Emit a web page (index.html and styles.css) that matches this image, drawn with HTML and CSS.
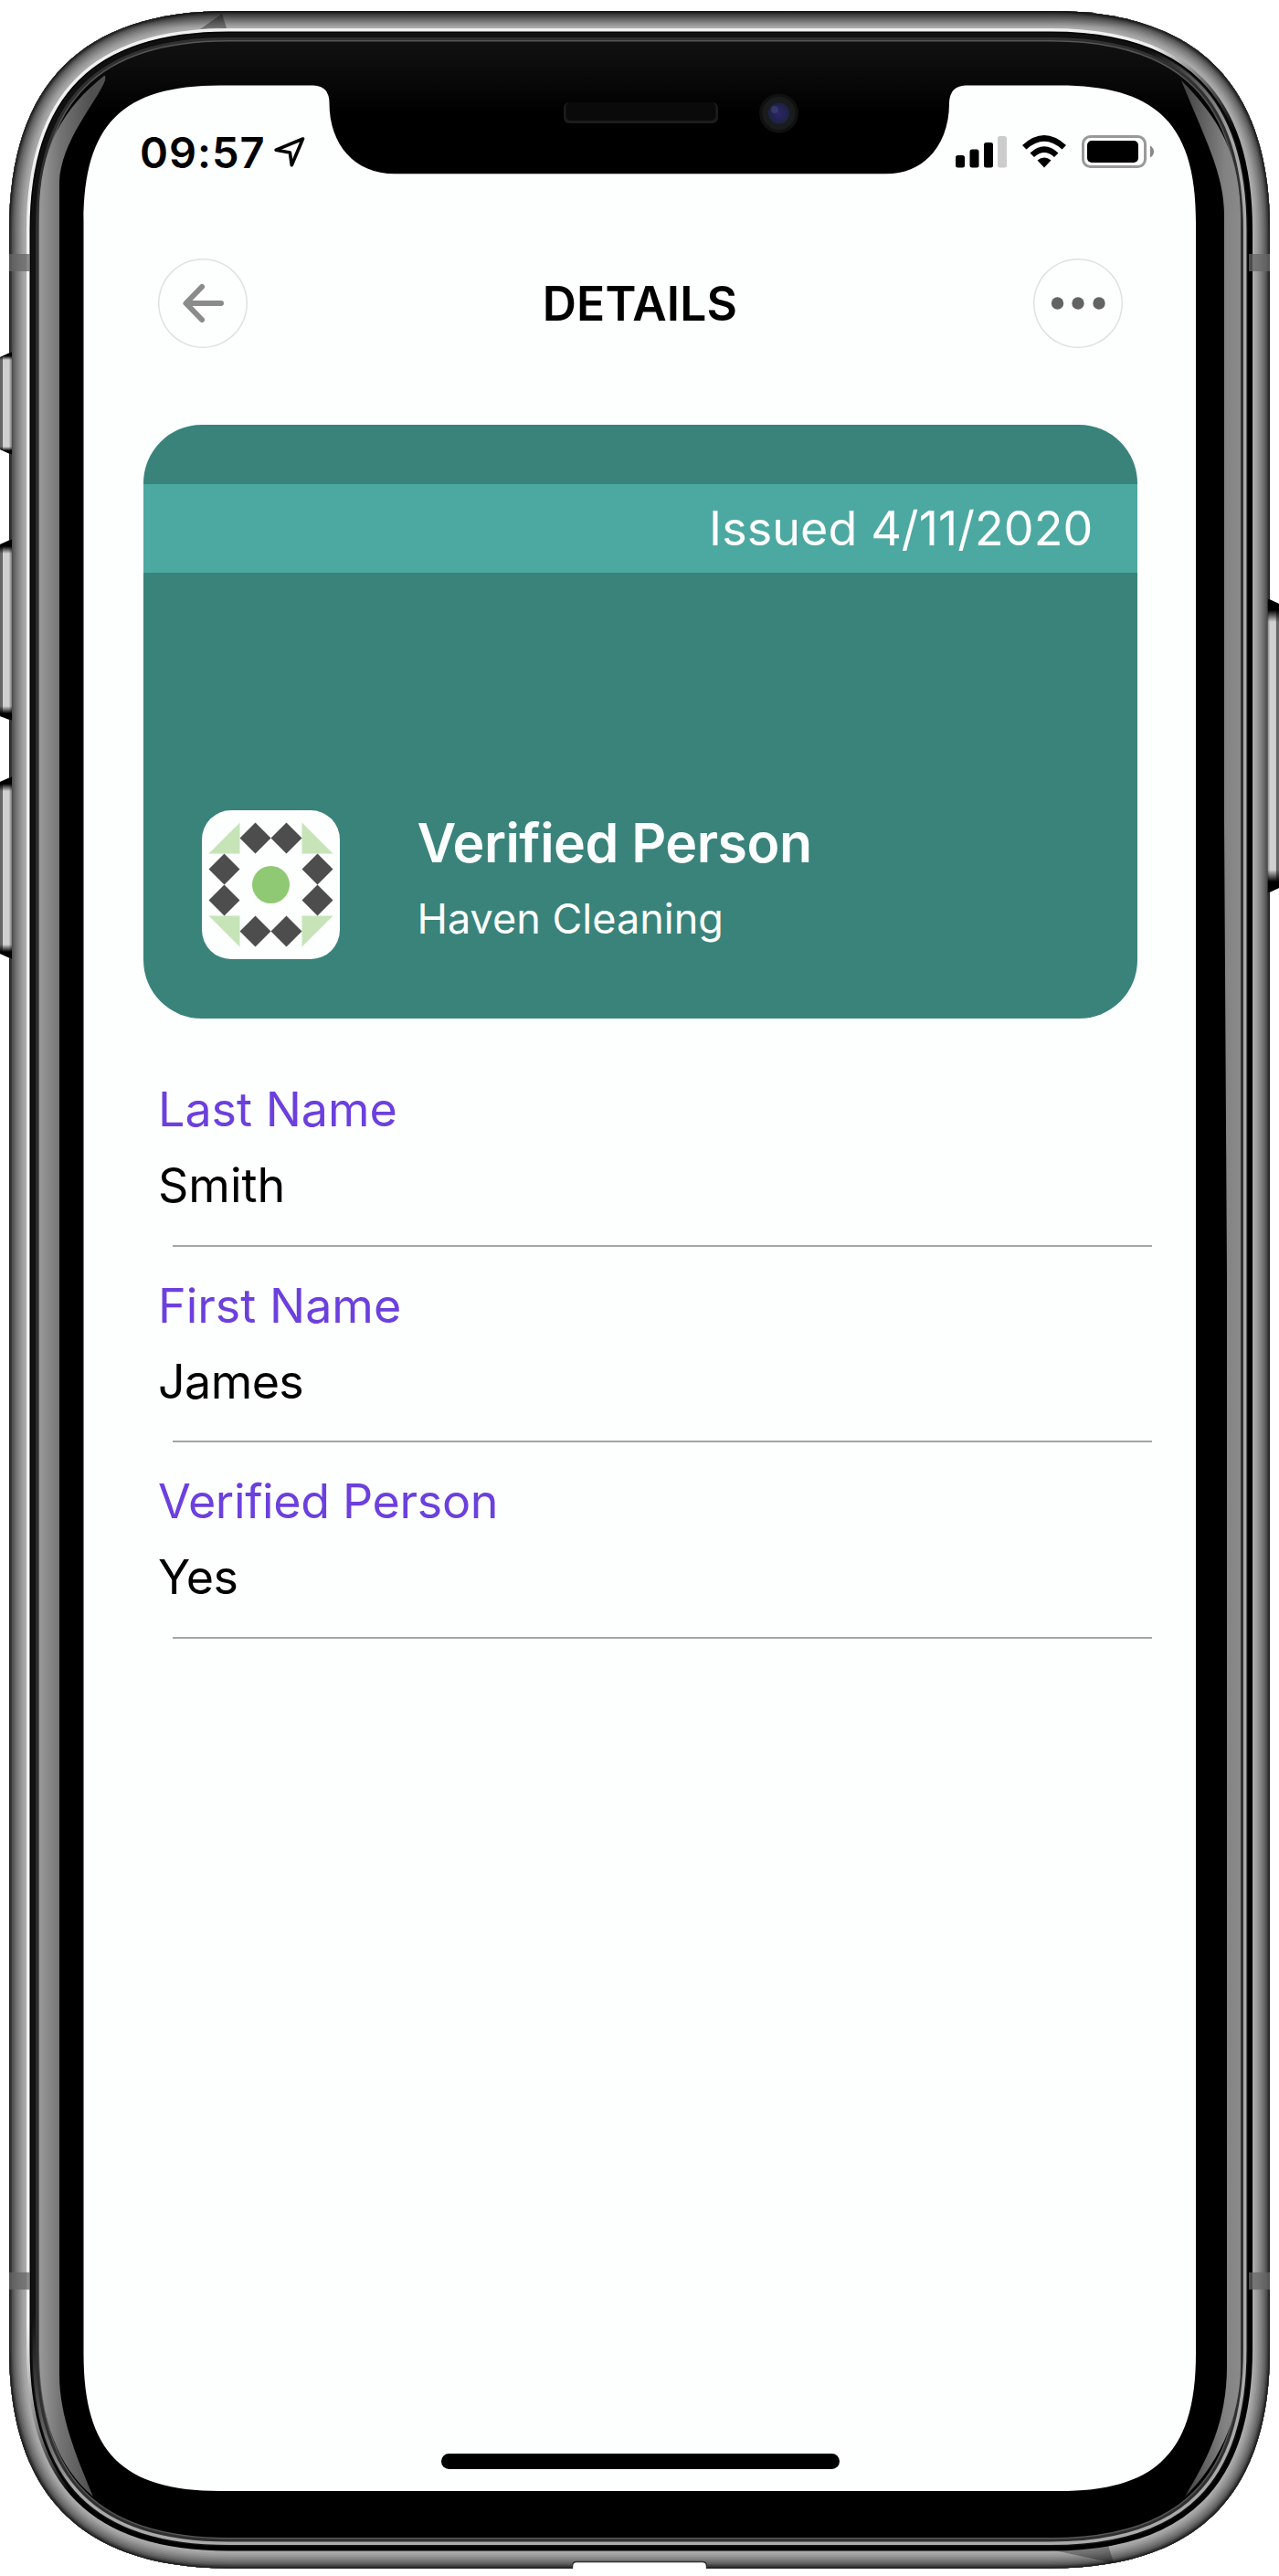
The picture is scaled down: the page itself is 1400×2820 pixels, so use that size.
FILE: index.html
```html
<!DOCTYPE html>
<html lang="en">
<head>
<meta charset="utf-8">
<title>Details</title>
<link rel="stylesheet" href="styles.css">
</head>
<body>
<div class="phone">
  <svg class="frame" viewBox="0 0 1400 2820" aria-hidden="true">
    <defs>
      <path id="body" d="M10 252C10 92 90 12 250 12H1150C1310 12 1390 92 1390 252V2571.500C1390 2731.500 1310 2811.500 1150 2811.500H250C90 2811.500 10 2731.500 10 2571.500Z"/>
      <clipPath id="bodyClip"><use href="#body"/></clipPath>
      <linearGradient id="bright" x1="0" y1="0" x2="1" y2="1"><stop offset=".46" stop-color="#f0f0f0"/><stop offset=".51" stop-color="#000"/></linearGradient>
      <linearGradient id="rim" x1="0" y1="0" x2="1" y2="1"><stop offset=".46" stop-color="#101010"/><stop offset=".51" stop-color="#aaa"/></linearGradient>
      <linearGradient id="topShade" x1="0" y1="0" x2="0" y2="1"><stop offset="0" stop-color="#000" stop-opacity=".35"/><stop offset="1" stop-color="#000" stop-opacity="0"/></linearGradient>
      <linearGradient id="topGlass" x1="0" y1="0" x2="0" y2="1"><stop offset="0" stop-color="#111"/><stop offset=".3" stop-color="#0d0d0d"/><stop offset="1" stop-color="#000"/></linearGradient>
      <linearGradient id="shineL" x1="43" y1="0" x2="100" y2="0" gradientUnits="userSpaceOnUse"><stop offset="0" stop-color="#999"/><stop offset=".4" stop-color="#747474"/><stop offset="1" stop-color="#505050"/></linearGradient>
      <linearGradient id="shineR" x1="1300" y1="0" x2="1358" y2="0" gradientUnits="userSpaceOnUse"><stop offset="0" stop-color="#484848"/><stop offset=".7" stop-color="#828282"/><stop offset="1" stop-color="#8a8a8a"/></linearGradient>
      <linearGradient id="keyL" x1="0" y1="0" x2="13" y2="0" gradientUnits="userSpaceOnUse"><stop offset=".2" stop-color="#666"/><stop offset=".25" stop-color="#d0d0d0"/><stop offset=".75" stop-color="#d0d0d0"/><stop offset="1" stop-color="#777"/></linearGradient>
      <linearGradient id="keyR" x1="1387" y1="0" x2="1400" y2="0" gradientUnits="userSpaceOnUse"><stop offset="0" stop-color="#777"/><stop offset=".25" stop-color="#d0d0d0"/><stop offset=".72" stop-color="#d0d0d0"/><stop offset=".8" stop-color="#666"/></linearGradient>
      <linearGradient id="keyEnds" x1="0" y1="0" x2="0" y2="1"><stop offset="0" stop-color="#000"/><stop offset=".04" stop-color="#000"/><stop offset=".08" stop-color="#000" stop-opacity="0"/><stop offset=".92" stop-color="#000" stop-opacity="0"/><stop offset=".96" stop-color="#000"/><stop offset="1" stop-color="#000"/></linearGradient>
      <radialGradient id="lens"><stop offset="0" stop-color="#2b2866"/><stop offset=".6" stop-color="#252255"/><stop offset="1" stop-color="#1c2340"/></radialGradient>
    </defs>
    <g clip-path="url(#bodyClip)" fill="none">
      <use href="#body" fill="#000"/>
      <rect x="43" y="44" width="1314" height="80" fill="url(#topGlass)"/>
      <use href="#body" stroke="#555" stroke-width="67"/>
      <use href="#body" stroke="#303030" stroke-width="64"/>
      <use href="#body" stroke="url(#rim)" stroke-width="58"/>
      <use href="#body" stroke="#111" stroke-width="51"/>
      <use href="#body" stroke="#000" stroke-width="48"/>
      <use href="#body" stroke="url(#bright)" stroke-width="45"/>
      <use href="#body" stroke="#a8a9a8" stroke-width="38"/>
      <use href="#body" stroke="#a0a1a0" stroke-width="33"/>
      <use href="#body" stroke="#969796" stroke-width="29"/>
      <use href="#body" stroke="#8a8b8a" stroke-width="25"/>
      <use href="#body" stroke="#7e7f7e" stroke-width="21"/>
      <use href="#body" stroke="#707170" stroke-width="17"/>
      <use href="#body" stroke="#606160" stroke-width="13"/>
      <use href="#body" stroke="#4e4f4e" stroke-width="9"/>
      <use href="#body" stroke="#3a3a3a" stroke-width="6"/>
      <use href="#body" stroke="#222" stroke-width="3"/>
      <rect x="100" y="12" width="1200" height="18" fill="url(#topShade)"/>
      <path d="M243 15L219 32Q232 30 248 31Z" fill="#000" fill-opacity=".35"/>
      <path d="M1213 2786L1219 2806L1145 2790Z" fill="#000" fill-opacity=".3"/>
      <path d="M10 278h23v19H10zM1367 278h23v19h-23zM10 2487.500h23v19H10zM1367 2487.500h23v19h-23z" fill="#666" fill-opacity=".75"/>
    </g>
    <path d="M627 2814V2809Q627 2805 631 2805H769Q773 2805 773 2809V2814Z" fill="#fff"/>
    <path d="M626.500 2811.500V2809Q626.500 2804.500 631 2804.500H769Q773.500 2804.500 773.500 2809V2811.500" fill="none" stroke="#333" stroke-width="1.500"/>
    <path d="M114 83C70 118 43 160 43 235V2575C43 2650 65 2702 102 2733C84 2690 65 2645 65 2600V200C66 155 107 110 115 88Q116 82 114 83Z" fill="url(#shineL)"/>
    <path d="M1293 88C1335 130 1358 170 1358 240V2590C1358 2650 1330 2702 1297 2733C1323 2690 1343 2650 1343 2590V1400L1340 900V235C1340 190 1318 150 1293 88Z" fill="url(#shineR)"/>
    <g fill="url(#keyL)">
      <path d="M0 391L13 385V498L0 492Z"/><path d="M0 596L13 590V789L0 784Z"/><path d="M0 856L13 850V1050L0 1044Z"/>
    </g>
    <path d="M1387.500 655L1400 661V972L1387.500 978Z" fill="url(#keyR)"/>
    <g fill="url(#keyEnds)">
      <path d="M0 391L13 385V498L0 492Z"/><path d="M0 596L13 590V789L0 784Z"/><path d="M0 856L13 850V1050L0 1044Z"/>
      <path d="M1387.500 655L1400 661V972L1387.500 978Z"/>
    </g>
    <path d="M91.500 243C91.500 136 134 93.500 241 93.500H343Q360.500 94 360.500 113C360.500 158 388 190.300 432 190.300H970C1012 190.300 1039 158 1039 113Q1039.500 94 1057 93.500H1159C1266 93.500 1309 136 1309 243V2577C1309 2684 1266 2727 1159 2727H241C134 2727 91.500 2684 91.500 2577Z" fill="#fdfefe"/>
    <rect x="617" y="112" width="169" height="23" rx="6" fill="#1c1c1d"/>
    <rect x="619.500" y="112" width="164" height="20" rx="5" fill="#0a0a0a"/>
    <circle cx="852.500" cy="124" r="21.500" fill="#101011"/>
    <circle cx="852.500" cy="124" r="18" fill="#1a1b1d"/>
    <circle cx="852.500" cy="124" r="11.500" fill="url(#lens)"/>
    <circle cx="848" cy="120" r="4" fill="#4a5284" fill-opacity=".45"/>
  </svg>

  <main class="screen">
    <header class="status">
      <div class="status-time">
        <span class="clock">09:57</span>
        <svg class="location" viewBox="0 0 34 34" aria-hidden="true"><path d="M31.500 2L2.200 14.200L17.400 17L19.300 30.800Z" fill="none" stroke="#000" stroke-width="3.600" stroke-linejoin="round"/></svg>
      </div>
      <div class="status-icons">
        <svg class="signal" viewBox="0 0 56 36" aria-hidden="true"><rect y="22" width="10" height="13.500" rx="2.500"/><rect x="15.500" y="15.500" width="10" height="20" rx="2.500"/><rect x="31" y="8" width="10" height="27.500" rx="2.500"/><rect x="46" y="1" width="10" height="34.500" rx="2.500" fill="#ccc"/></svg>
        <svg class="wifi" viewBox="0 0 48 36" aria-hidden="true"><path d="M24 35.500L16.500 27.500Q24 21.500 31.500 27.500ZM8.500 19.500Q24 5 39.500 19.500L35 24Q24 14 13 24ZM0 11Q24-11 48 11L43.500 15.500Q24-2 4.500 15.500Z"/></svg>
        <svg class="battery" viewBox="0 0 80 36" aria-hidden="true"><rect x="1.500" y="1.500" width="68" height="33" rx="8" fill="none" stroke="#999" stroke-width="3"/><rect x="6" y="6" width="56" height="24" rx="5"/><path d="M75 11.500Q79 14 79 18T75 24.500Z" fill="#888"/></svg>
      </div>
    </header>

    <nav class="nav">
      <button class="round" aria-label="Back"><svg viewBox="0 0 98 98"><path d="M69 49H31M48 31L30.500 49L48 67" fill="none" stroke="#8b8b8b" stroke-width="6" stroke-linecap="round" stroke-linejoin="round"/></svg></button>
      <h1 class="title">DETAILS</h1>
      <button class="round" aria-label="More"><svg viewBox="0 0 98 98" fill="#636363"><circle cx="26.500" cy="49" r="6.700"/><circle cx="49" cy="49" r="6.700"/><circle cx="72" cy="49" r="6.700"/></svg></button>
    </nav>

    <section class="card">
      <div class="issued">Issued 4/11/2020</div>
      <div class="identity">
        <svg class="emblem" viewBox="0 0 151 163" aria-hidden="true">
          <rect width="151" height="163" rx="32" fill="#fdfefe"/>
          <path d="M7.500 47.500H41.500V13.500ZM109.500 13.500V47.500H143.500ZM7.500 115.500H41.500V149.500ZM109.500 115.500H143.500L109.500 149.500Z" fill="#c6e4b8"/>
          <path d="M58.500 13.500L75.500 30.500L92.500 13.500L109.500 30.500L92.500 47.500L75.500 30.500L58.500 47.500L41.500 30.500ZM58.500 115.500L75.500 132.500L92.500 115.500L109.500 132.500L92.500 149.500L75.500 132.500L58.500 149.500L41.500 132.500ZM24.500 47.500L41.500 64.500L24.500 81.500L41.500 98.500L24.500 115.500L7.500 98.500L24.500 81.500L7.500 64.500ZM126.500 47.500L143.500 64.500L126.500 81.500L143.500 98.500L126.500 115.500L109.500 98.500L126.500 81.500L109.500 64.500Z" fill="#4d4d4d"/>
          <circle cx="75.500" cy="81.500" r="20.500" fill="#8fc973"/>
        </svg>
        <div class="identity-text">
          <h2 class="credential">Verified Person</h2>
          <p class="issuer">Haven Cleaning</p>
        </div>
      </div>
    </section>

    <dl class="fields">
      <div class="field"><dt>Last Name</dt><dd>Smith</dd></div>
      <div class="field"><dt>First Name</dt><dd>James</dd></div>
      <div class="field"><dt class="tight">Verified Person</dt><dd>Yes</dd></div>
    </dl>
    <div class="home"></div>
  </main>
</div>
</body>
</html>
```
FILE: styles.css
```css
* { box-sizing: border-box; margin: 0; padding: 0; }

body {
  background: #fff;
  color: #000;
  font-family: Inter, "Liberation Sans", sans-serif;
}

.phone {
  position: relative;
  width: 1400px;
  height: 2820px;
  padding: 93px 91px;
  overflow: hidden;
}

.frame {
  position: absolute;
  inset: 0;
  width: 1400px;
  height: 2820px;
}

.screen {
  position: relative;
  display: flex;
  flex-direction: column;
  height: 2634px;
}

.status {
  display: flex;
  justify-content: space-between;
  align-items: center;
  height: 58px;
  margin-top: 45px;
  padding: 0 45px 0 62px;
}

.status-time,
.status-icons {
  display: flex;
  align-items: center;
}

.status-time { gap: 9px; }
.clock { font-size: 47px; font-weight: 600; line-height: 58px; letter-spacing: 1px; }
.location { width: 34px; height: 34px; }
.status-icons { padding-bottom: 2px; }
.signal { width: 56px; height: 36px; }
.wifi { width: 48px; height: 36px; margin-left: 17px; }
.battery { width: 80px; height: 36px; margin-left: 17px; }

.nav {
  display: flex;
  justify-content: space-between;
  align-items: center;
  height: 98px;
  margin-top: 87px;
  padding: 0 80.5px 0 81.5px;
}

.round {
  display: flex;
  width: 98px;
  height: 98px;
  border: 0;
  border-radius: 50%;
  background: none;
  box-shadow: inset 0 0 0 1.5px #dfe2e1;
}

.round svg { width: 98px; height: 98px; }
.title { font-size: 51.5px; font-weight: 600; line-height: 64px; letter-spacing: 0.2px; }

.card {
  display: flex;
  flex-direction: column;
  height: 650px;
  margin: 84px 64.5px 0 65.5px;
  padding-top: 65px;
  border-radius: 64px;
  background: #39837b;
  color: #fdfefe;
  overflow: hidden;
}

.issued {
  height: 97px;
  padding-right: 48px;
  background: #4ca9a1;
  font-size: 52px;
  font-weight: 400;
  line-height: 97px;
  letter-spacing: 0.1px;
  text-align: right;
}

.identity {
  display: flex;
  gap: 85px;
  margin: auto 64px 65px;
}

.emblem { width: 151px; height: 163px; }
.credential { font-size: 59px; font-weight: 600; line-height: 72px; letter-spacing: -0.5px; }
.issuer { font-size: 45px; font-weight: 400; line-height: 60px; margin-top: 17px; }

.fields { padding-top: 35px; }

.field {
  height: 214.5px;
  padding: 23px 0 0 82px;
  background: linear-gradient(#a3a7a6, #a3a7a6) 98px 100% / 1072px 2px no-repeat;
}

.field dt,
.field dd { font-size: 52px; line-height: 83px; }
.field dt { color: #6c40dd; }
.field dt.tight { letter-spacing: -0.35px; }
.field + .field dd { letter-spacing: -0.6px; }

.home {
  width: 436px;
  height: 17px;
  margin: auto auto 24px 392px;
  border-radius: 9px;
  background: #000;
}
```
